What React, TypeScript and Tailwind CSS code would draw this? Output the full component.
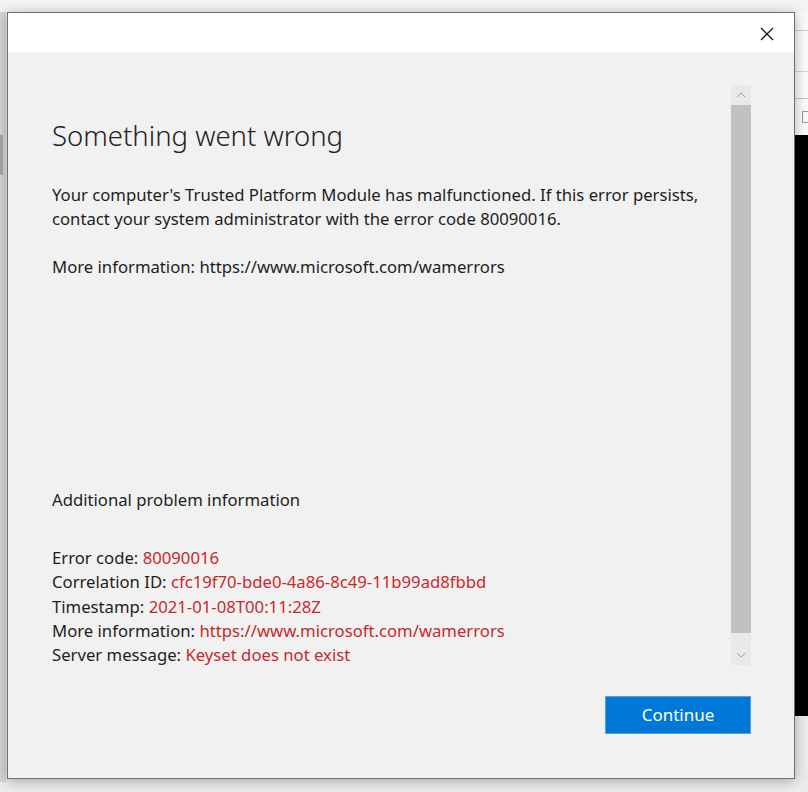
import React from "react";

const Red = ({ children }: { children: React.ReactNode }) => (
  <span className="text-[#c8292b]">{children}</span>
);

export default function App() {
  return (
    <div className="relative w-[808px] h-[792px] overflow-hidden bg-[#ececec] pl-[7px] pt-[12px] font-['Noto_Sans',sans-serif] text-[#1e1e1e]">
      {/* background desktop pieces */}
      <div className="absolute left-0 top-0 w-[808px] h-[12px] bg-[#f4f4f4]" />
      <div className="absolute left-0 top-[12px] w-[6px] h-[770px] bg-[#d6d6d6]" />
      <div className="absolute left-0 top-[135px] w-[3px] h-[40px] bg-[#a8a8a8]" />
      <div className="absolute left-[795px] top-[12px] w-[13px] h-[123px] bg-[#fafafa]" />
      <div className="absolute left-[795px] top-[30px] w-[13px] h-px bg-[#cfcfcf]" />
      <div className="absolute left-[795px] top-[71px] w-[13px] h-px bg-[#d6d6d6]" />
      <div className="absolute left-[795px] top-[98px] w-[13px] h-px bg-[#c4c4c4]" />
      <div className="absolute left-[802px] top-[111px] w-[8px] h-[12px] border border-[#9a9a9a]" />
      <div className="absolute left-[795px] top-[135px] w-[13px] h-[581px] bg-black" />

      <div className="relative z-10 w-[788px] h-[767px] border border-[#707070] bg-[#f1f1f1] flex flex-col shadow-[0_2px_12px_rgba(0,0,0,0.3)]">
        <div className="h-[39px] bg-white flex items-center justify-end pr-[20px]">
          <svg width="14" height="14" viewBox="0 0 14 14" className="mt-[2px]">
            <path d="M1 1 L13 13 M13 1 L1 13" stroke="#1a1a1a" strokeWidth="1.3" />
          </svg>
        </div>
        <div className="flex-1 flex flex-col pl-[44px] pr-[43px]">
          <div className="flex h-[613px]">
            <div className="flex-1 pt-[66px] flex flex-col">
              <h1 className="text-[27.5px] leading-[36px] font-light text-[#222]">Something went wrong</h1>
              <p className="mt-[29px] text-[16.7px] leading-[24px] whitespace-nowrap">
                Your computer's Trusted Platform Module has malfunctioned. If this error persists,
                <br />
                contact your system administrator with the error code 80090016.
              </p>
              <p className="mt-[24px] text-[16.7px] leading-[24px]">
                More information: https://www.microsoft.com/wamerrors
              </p>
              <p className="mt-[209px] text-[16.7px] leading-[24px]">Additional problem information</p>
              <div className="mt-[34px] text-[16.7px] leading-[24.3px] flex flex-col">
                <div>Error code: <Red>80090016</Red></div>
                <div>Correlation ID: <Red>cfc19f70-bde0-4a86-8c49-11b99ad8fbbd</Red></div>
                <div>Timestamp: <Red>2021-01-08T00:11:28Z</Red></div>
                <div>More information: <Red>https://www.microsoft.com/wamerrors</Red></div>
                <div>Server message: <Red>Keyset does not exist</Red></div>
              </div>
            </div>
            <div className="w-[20px] mt-[33px] h-[580px] flex flex-col">
              <div className="h-[20px] bg-[#e9e9e9] flex items-center justify-center">
                <svg width="10" height="6" viewBox="0 0 10 6">
                  <path d="M1 5 L5 1 L9 5" stroke="#a0a0a0" strokeWidth="1" fill="none" />
                </svg>
              </div>
              <div className="flex-1 bg-[#c1c1c1]" />
              <div className="h-[32px] bg-[#e9e9e9] flex items-end justify-center pb-[7px]">
                <svg width="10" height="6" viewBox="0 0 10 6">
                  <path d="M1 1 L5 5 L9 1" stroke="#a0a0a0" strokeWidth="1" fill="none" />
                </svg>
              </div>
            </div>
          </div>
          <div className="flex justify-end mt-[31px]">
            <button className="w-[146px] h-[38px] bg-[#0078d7] text-white text-[17px] border border-[#5a9fd8]">
              Continue
            </button>
          </div>
        </div>
      </div>
    </div>
  );
}
